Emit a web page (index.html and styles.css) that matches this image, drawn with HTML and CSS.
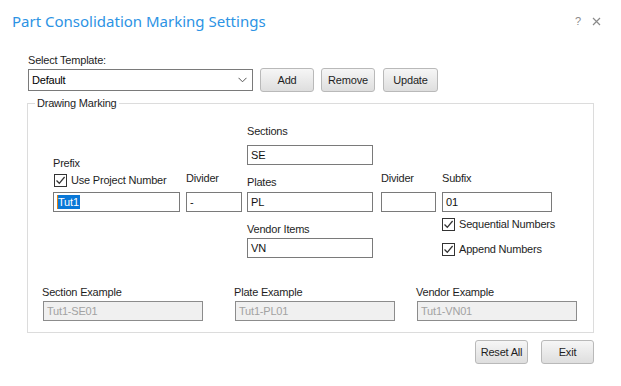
FILE: index.html
```html
<!DOCTYPE html>
<html lang="en">
  <head>
    <meta charset="UTF-8" />
    <title>Part Consolidation Marking Settings</title>
    <link rel="stylesheet" href="styles.css">
  </head>
  <body>
    <div class="dialog">
      <div class="titleBar">
        <h1>Part Consolidation Marking Settings</h1>
        <div class="titleTools">
          <span class="helpIcon">?</span>
          <svg class="closeIcon" width="9" height="9" viewBox="0 0 9 9">
            <path d="M1 1 L8 8 M8 1 L1 8" stroke="#8a8a8a" stroke-width="1.2" fill="none" />
          </svg>
        </div>
      </div>

      <div class="templateBlock">
        <div class="label">Select Template:</div>
        <div class="templateRow">
          <div class="select">
            <span>Default</span>
            <svg width="9" height="6" viewBox="0 0 9 6">
              <path d="M0.5 0.8 L4.5 4.8 L8.5 0.8" stroke="#555" stroke-width="1" fill="none" />
            </svg>
          </div>
          <button class="btn btnAdd">Add</button>
          <button class="btn">Remove</button>
          <button class="btn btnUpdate">Update</button>
        </div>
      </div>

      <fieldset class="marking">
        <legend>Drawing Marking</legend>
        <div class="markGrid">
          <!-- top part -->
          <div class="cell cellPrefix">
            <div class="label">Prefix</div>
            <label class="check checkProject"><span class="box"><svg width="11" height="11" viewBox="0 0 11 11"><path d="M1.5 5.5 L4.3 8.3 L9.6 2" stroke="#333" stroke-width="1.3" fill="none" /></svg></span>Use Project Number</label>
          </div>
          <div class="cell cellDivider"><div class="label">Divider</div></div>
          <div class="cell cellCenter">
            <div class="label">Sections</div>
            <div class="field wCenter sectionsField">SE</div>
            <div class="label platesLabel">Plates</div>
          </div>
          <div class="cell cellDivider"><div class="label">Divider</div></div>
          <div class="cell cellDivider"><div class="label">Subfix</div></div>

          <!-- input row -->
          <div class="field wPrefix"><span class="sel">Tut1</span></div>
          <div class="field wDivider">-</div>
          <div class="field wCenter">PL</div>
          <div class="field wDivider2"></div>
          <div class="field wSubfix">01</div>

          <!-- lower part -->
          <div></div>
          <div></div>
          <div class="cell cellVendor">
            <div class="label">Vendor Items</div>
            <div class="field wCenter vendorField">VN</div>
          </div>
          <div></div>
          <div class="cell cellChecks">
            <label class="check"><span class="box"><svg width="11" height="11" viewBox="0 0 11 11"><path d="M1.5 5.5 L4.3 8.3 L9.6 2" stroke="#333" stroke-width="1.3" fill="none" /></svg></span>Sequential Numbers</label>
            <label class="check checkAppend"><span class="box"><svg width="11" height="11" viewBox="0 0 11 11"><path d="M1.5 5.5 L4.3 8.3 L9.6 2" stroke="#333" stroke-width="1.3" fill="none" /></svg></span>Append Numbers</label>
          </div>
        </div>

        <div class="examples">
          <div class="example">
            <div class="label">Section Example</div>
            <div class="field disabled">Tut1-SE01</div>
          </div>
          <div class="example">
            <div class="label">Plate Example</div>
            <div class="field disabled">Tut1-PL01</div>
          </div>
          <div class="example">
            <div class="label">Vendor Example</div>
            <div class="field disabled">Tut1-VN01</div>
          </div>
        </div>
      </fieldset>

      <div class="footer">
        <button class="btn btnFoot">Reset All</button>
        <button class="btn btnFoot">Exit</button>
      </div>
    </div>
  </body>
</html>
```

FILE: styles.css
```css
* {
  padding: 0;
  margin: 0;
  box-sizing: border-box;
}
body {
  background: #fff;
  font-family: "Liberation Sans", Arial, sans-serif;
  font-size: 11px;
  letter-spacing: -0.2px;
  color: #1e1e1e;
}
.dialog {
  width: 621px;
  height: 386px;
  background: #fff;
}
.titleBar {
  display: flex;
  justify-content: space-between;
  align-items: flex-start;
  padding: 11px 20px 0 12px;
  height: 52px;
}
.titleBar h1 {
  font-family: "Noto Sans", "Open Sans", sans-serif;
  font-weight: 400;
  font-size: 15px;
  line-height: 20px;
  color: #2c93e4;
  letter-spacing: 0;
}
.titleTools {
  display: flex;
  align-items: center;
  gap: 11px;
  padding-top: 5px;
}
.helpIcon {
  color: #8a8a8a;
  font-size: 11px;
  line-height: 11px;
}
.closeIcon {
  display: block;
}
.label {
  line-height: 13px;
  white-space: nowrap;
}
.templateBlock {
  padding: 2px 0 0 28px;
}
.templateRow {
  display: flex;
  align-items: flex-start;
  margin-top: 1px;
}
.select {
  width: 225px;
  height: 22px;
  margin-top: 1px;
  border: 1px solid #7a7a7a;
  display: flex;
  align-items: center;
  justify-content: space-between;
  padding: 0 5px 0 3px;
  color: #000;
}
.btn {
  font-family: inherit;
  font-size: 11px;
  letter-spacing: -0.2px;
  color: #1e1e1e;
  height: 24px;
  width: 54px;
  border: 1px solid #b9b9b9;
  border-radius: 3px;
  background: linear-gradient(#f6f6f6, #dedede);
}
.btnAdd {
  margin-left: 7px;
  margin-right: 7px;
}
.btnUpdate {
  margin-left: 8px;
  width: 55px;
}
.marking {
  margin: 5px 0 0 27px;
  width: 567px;
  border: 1px solid #dcdcdc;
  padding: 0 0 11px 0;
  min-width: 0;
}
.marking legend {
  margin-left: 7px;
  padding: 0 2px;
  line-height: 13px;
}
.markGrid {
  display: grid;
  grid-template-columns: 133px 61px 134px 61px 110px;
  margin: 15px 0 0 25px;
}
.cell {
  display: flex;
  flex-direction: column;
}
.cellPrefix {
  justify-content: flex-end;
  padding-bottom: 5px;
}
.cellPrefix .label {
  margin-bottom: 4px;
}
.cellDivider {
  justify-content: flex-end;
  padding-bottom: 7px;
}
.sectionsField {
  margin-top: 7px;
}
.platesLabel {
  margin: 11px 0 3px;
}
.field {
  height: 20px;
  border: 1px solid #7a7a7a;
  background: #fff;
  padding: 0 3px;
  line-height: 18px;
  color: #111;
  white-space: nowrap;
}
.wPrefix { width: 127px; }
.wDivider { width: 56px; }
.wCenter { width: 126px; }
.wDivider2 { width: 55px; }
.wSubfix { width: 110px; }
.sel {
  display: inline-block;
  background: #0a78d7;
  color: #fff;
  line-height: 14px;
  padding: 0 1px 0 0;
  border-left: 1px solid #e8820c;
}
.cellVendor {
  padding-top: 11px;
}
.vendorField {
  margin-top: 2px;
}
.cellChecks {
  padding-top: 6px;
}
.check {
  display: flex;
  align-items: center;
  gap: 4px;
  line-height: 13px;
  white-space: nowrap;
}
.checkProject {
  margin-left: 1px;
}
.checkAppend {
  margin-top: 12px;
}
.box {
  width: 13px;
  height: 13px;
  border: 1px solid #333;
  background: #fff;
  display: flex;
  align-items: center;
  justify-content: center;
}
.box svg {
  display: block;
}
.examples {
  display: grid;
  grid-template-columns: 192px 182px 160px;
  margin: 28px 0 0 14px;
}
.example .label {
  margin-bottom: 2px;
}
.example .field {
  width: 160px;
  margin-left: 1px;
}
.disabled {
  background: #f0f0f0;
  border-color: #8c8c8c;
  color: #a2a2a2;
}
.footer {
  display: flex;
  justify-content: flex-end;
  gap: 13px;
  padding: 7px 27px 0 0;
}
.btnFoot {
  width: 53px;
}
```
